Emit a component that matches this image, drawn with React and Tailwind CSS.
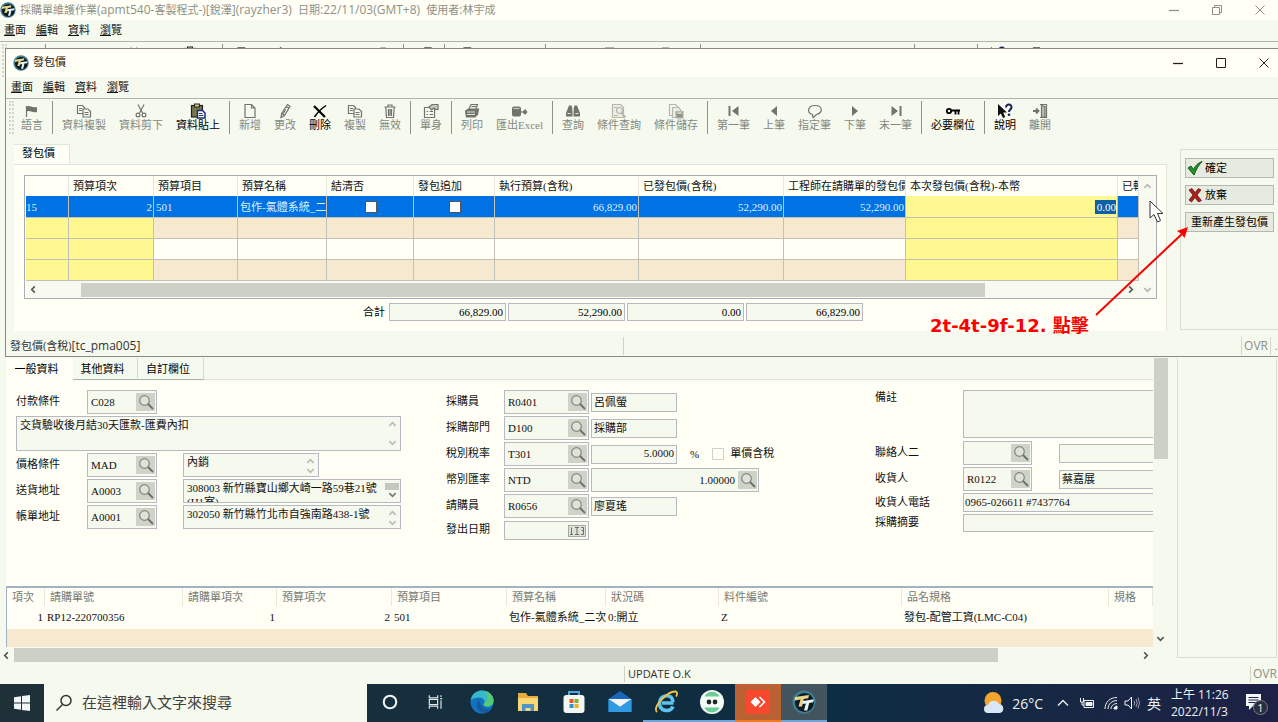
import React from "react";

const FORM_FONT = "font-['Liberation_Serif','Noto_Sans_CJK_TC',serif]";
const UI_FONT = "font-['Open_Sans','Noto_Sans_CJK_TC',sans-serif]";

function Logo({ className }) {
  return (
    <svg viewBox="0 0 24 24" className={className} aria-hidden="true">
      <circle cx="12" cy="12" r="11.5" fill="#3f7f96" />
      <circle cx="12.5" cy="12.5" r="9.5" fill="#0d1b22" />
      <path d="M3 7l14-2-.7 3.200-4.500.7-1.800 7.600H6.500l2-7-6 .9z" fill="#e8d48a" />
      <path d="M11 11l11-1.700-.8 3-4 .6-1.900 7.600h-3.300l1.900-7-3.600.6z" fill="#e9f2f5" />
    </svg>
  );
}

function Glyph({ children, className = "" }) {
  return (
    <svg
      viewBox="0 0 16 16"
      className={`h-4 w-4 ${className}`}
      fill="none"
      stroke="currentColor"
      strokeWidth="1.2"
      aria-hidden="true"
    >
      {children}
    </svg>
  );
}

const glyphs = {
  flag: (
    <>
      <path d="M2.500 3v11" />
      <path d="M3 3.500c3-1.500 4 1.500 10 .5v5c-6 1-7-2-10-.5z" fill="currentColor" stroke="none" />
    </>
  ),
  copy: (
    <>
      <path d="M1.500 2.500h5l2 2v6h-7z" fill="#f6f9ed" />
      <path d="M3 5.500h3M3 7.500h3" />
      <path d="M7 6h5l2.500 2.500v5.500H7z" fill="#f6f9ed" />
      <path d="M8.500 9.500h4M8.500 11.500h4" />
    </>
  ),
  cut: (
    <>
      <path d="M5 1.500l4.500 8.500M11 1.500L6.500 10" />
      <circle cx="5" cy="12" r="1.900" />
      <circle cx="11" cy="12" r="1.900" />
    </>
  ),
  paste: (
    <>
      <rect x="1.500" y="2.500" width="11" height="11.500" fill="#77764a" stroke="#222" />
      <rect x="4.500" y="1" width="5" height="3" fill="#c9c58a" stroke="#222" strokeWidth="1" />
      <path d="M7.500 7.500h5l2.500 2.500v5H7.500z" fill="#fff" stroke="#1c2b7a" strokeWidth="1.500" />
      <path d="M9 10.500h3.500M9 12.500h4.500" stroke="#1c2b7a" />
    </>
  ),
  page: <path d="M3 1.500h6.500L13 5v9.500H3zM9.500 1.500V5H13" />,
  pencil: <path d="M10.500 1.500l2.500 1.800-5.500 9.200-3.500 2 .6-4zM9.300 3.500l2.500 1.800M5 10.500l2.400 1.800M8.700 6.500l-2.400 4" />,
  cross: (
    <>
      <path d="M2 3l11 11" strokeWidth="2.200" />
      <path d="M14 2.500C9 6 5 10 2.500 14" strokeWidth="1.500" />
    </>
  ),
  trash: <path d="M2.500 4h11M6 4V2h4v2M3.800 4l.7 10.500h7L12.200 4M6.500 6v7M8 6v7M9.500 6v7" />,
  detail: (
    <>
      <path d="M1.500 4.500h10v10h-10z" />
      <path d="M3.500 8.500h1.500M6.500 8.500h3.500M3.500 11.500h1.500M6.500 11.500h3.500" />
      <path d="M6 4l3-2.500h6v5h-2.500L11 5 8.500 7z" fill="#c5c9bc" />
    </>
  ),
  print: (
    <>
      <path d="M5 6l2-4.500h6.500L12 6" fill="#f6f9ed" />
      <path d="M1.500 8l3-2h10l-1 5.500-2.500 2.500H2.500z" fill="currentColor" />
      <path d="M3 9h8M3 11.500h8" stroke="#dfe3d6" />
      <path d="M7.500 3.500H12" />
    </>
  ),
  exportDb: (
    <>
      <rect x="0" y="3.500" width="9" height="10" rx="2" fill="currentColor" stroke="none" />
      <path d="M1.500 5.500h6" stroke="#c5c9bc" />
      <path d="M13 6l2.500 3-2.500 3-2.500-3z" fill="currentColor" stroke="none" />
      <path d="M9 9h3" />
    </>
  ),
  find: (
    <>
      <path d="M4 2.500h2.500L7.500 6v7.500H1V10zM12 2.500H9.500L8.500 6v7.500H15V10z" fill="currentColor" stroke="none" />
      <path d="M2.500 10.500h3M10.500 10.500h3M7 7h2" stroke="#e8ecdf" />
    </>
  ),
  findPage: (
    <>
      <path d="M1.500 1.500h8l3 3v10h-11z" fill="#eceee4" />
      <circle cx="8.500" cy="7.500" r="3" />
      <path d="M10.500 10l4 4.500" strokeWidth="2" />
      <path d="M3 4.500h3M3 12.500h4" />
    </>
  ),
  savePage: (
    <>
      <path d="M1.500 1.500h6l2 2v9h-8z" />
      <path d="M4.500 4.500h6l2 2v8h-8z" fill="#eceee4" />
      <rect x="8" y="8.500" width="7" height="6.500" fill="#8f948a" />
      <path d="M9.500 10h4" stroke="#f6f9ed" />
    </>
  ),
  first: (
    <>
      <path d="M3.500 3v10" strokeWidth="2" />
      <path d="M12.500 3v10L6 8z" fill="currentColor" stroke="none" />
    </>
  ),
  prev: <path d="M11 3v10L5 8z" fill="currentColor" stroke="none" />,
  bubble: <path d="M5.500 11.500C-.5 10 .5 2.500 8 2.500s8.500 7 1.500 9l-3.500 3z" />,
  next: <path d="M5 3v10l6-5z" fill="currentColor" stroke="none" />,
  last: (
    <>
      <path d="M12.500 3v10" strokeWidth="2" />
      <path d="M3.500 3v10L10 8z" fill="currentColor" stroke="none" />
    </>
  ),
  key: (
    <>
      <circle cx="4" cy="8" r="2.200" strokeWidth="1.800" />
      <path d="M6.500 7.500H15M10.500 8v3.500M13.500 8v3.500" strokeWidth="1.800" />
    </>
  ),
  help: (
    <>
      <path d="M1 1v12l2.800-2.500L6 15l2.200-1-2-4.500H10z" fill="#111" stroke="none" />
      <path d="M9 4.500C9 .5 15 .8 14.500 4.500c-.3 2-2.500 2-2.500 4.500" stroke="#17225c" strokeWidth="2" />
      <circle cx="12" cy="11.800" r="1.300" fill="#17225c" stroke="none" />
    </>
  ),
  exit: (
    <>
      <path d="M8 1.500h6.500v13H8" />
      <path d="M9.500 2.500l3.500 1v11l-3.500-1z" fill="#b9bdb0" />
      <path d="M1 8h5M4 5.500L6.500 8 4 10.500" strokeWidth="1.800" />
    </>
  ),
};

const toolbarGroups = [
  [{ label: "語言", icon: "flag" }],
  [
    { label: "資料複製", icon: "copy" },
    { label: "資料剪下", icon: "cut" },
    { label: "資料貼上", icon: "paste", on: true },
  ],
  [
    { label: "新增", icon: "page" },
    { label: "更改", icon: "pencil" },
    { label: "刪除", icon: "cross", on: true },
    { label: "複製", icon: "copy" },
    { label: "無效", icon: "trash" },
  ],
  [{ label: "單身", icon: "detail" }],
  [
    { label: "列印", icon: "print" },
    { label: "匯出Excel", icon: "exportDb" },
  ],
  [
    { label: "查詢", icon: "find" },
    { label: "條件查詢", icon: "findPage", pale: true },
    { label: "條件儲存", icon: "savePage", pale: true },
  ],
  [
    { label: "第一筆", icon: "first" },
    { label: "上筆", icon: "prev" },
    { label: "指定筆", icon: "bubble" },
    { label: "下筆", icon: "next" },
    { label: "末一筆", icon: "last" },
  ],
  [{ label: "必要欄位", icon: "key", on: true }],
  [
    { label: "說明", icon: "help", on: true },
    { label: "離開", icon: "exit" },
  ],
];

function Toolbar({ className = "pl-[3px]" }) {
  return (
    <div role="toolbar" className={`flex items-center gap-px border-t border-[#b0b3a9] py-[2px] ${className} ${FORM_FONT}`}>
      <span className="h-[33px] w-[5px] border-x-2 border-dotted border-[#d3d6cb]" />
      {toolbarGroups.map((group, i) => (
        <React.Fragment key={i}>
          {i > 0 && <span className="mx-[2px] h-[33px] w-px bg-[#8f938a]" />}
          {group.map((t) => (
            <button
              key={t.label}
              type="button"
              disabled={!t.on}
              className={`flex flex-col items-center px-[6px] text-[11px] leading-[13px] whitespace-nowrap ${
                t.on ? "text-black" : "text-[#858980]"
              }`}
            >
              <Glyph className={t.on ? "text-black" : t.pale ? "text-[#b4b8ac]" : "text-[#70746b]"}>{glyphs[t.icon]}</Glyph>
              {t.label}
            </button>
          ))}
        </React.Fragment>
      ))}
    </div>
  );
}

function TitleBar({ children, muted, restore, className }) {
  return (
    <header className={`flex items-center bg-[#fffff6] ${className}`}>
      <Logo className="h-4 w-4" />
      <h1 className={`ml-1 flex-1 font-normal whitespace-pre ${UI_FONT} ${muted ? "text-[#8d918a]" : "text-[#222]"}`}>{children}</h1>
      <div className={`flex gap-[31px] ${muted ? "text-[#8d918a]" : "text-[#222]"}`}>
        <button type="button" aria-label="最小化">
          <svg viewBox="0 0 12 12" className="h-3 w-3" stroke="currentColor" fill="none"><path d="M1 6.500h10" strokeWidth="1.300" /></svg>
        </button>
        <button type="button" aria-label={restore ? "還原" : "最大化"}>
          <svg viewBox="0 0 12 12" className="h-3 w-3" stroke="currentColor" fill="none">
            {restore ? <path d="M1.500 3.500h7v7h-7zM3.500 3.500v-2h7v7h-2" /> : <path d="M1.500 1.500h9v9h-9z" />}
          </svg>
        </button>
        <button type="button" aria-label="關閉">
          <svg viewBox="0 0 12 12" className="h-3 w-3" stroke="currentColor" fill="none"><path d="M1.500 1.500l9 9M10.500 1.500l-9 9" /></svg>
        </button>
      </div>
    </header>
  );
}

function MenuBar({ className }) {
  return (
    <nav className={`flex h-[21px] items-center gap-[10px] pb-px text-[11px] text-[#111] ${UI_FONT} ${className}`}>
      {["畫面", "編輯", "資料", "瀏覽"].map((m) => (
        <button key={m} type="button">
          <span className="underline underline-offset-1">{m[0]}</span>
          {m[1]}
        </button>
      ))}
    </nav>
  );
}

function Chevron({ dir, className = "text-[#555]" }) {
  const d = {
    left: "M6.500 1.500L3 5l3.500 3.500",
    right: "M3.500 1.500L7 5 3.500 8.500",
    up: "M1.500 6.500L5 3l3.500 3.500",
    down: "M1.500 3.500L5 7l3.500-3.500",
  }[dir];
  return (
    <svg viewBox="0 0 10 10" className={`h-[9px] w-[9px] shrink-0 ${className}`} fill="none" stroke="currentColor" strokeWidth="1.800" aria-hidden="true">
      <path d={d} />
    </svg>
  );
}

const budgetCols = [
  { w: "w-[43px]", head: "", yellow: true },
  { w: "w-[85px]", head: "預算項次", yellow: true },
  { w: "w-[84px]", head: "預算項目" },
  { w: "w-[89px]", head: "預算名稱" },
  { w: "w-[87px]", head: "結清否" },
  { w: "w-[81px]", head: "發包追加" },
  { w: "w-[144px]", head: "執行預算(含稅)" },
  { w: "w-[145px]", head: "已發包價(含稅)" },
  { w: "w-[122px]", head: "工程師在請購單的發包價" },
  { w: "", head: "本次發包價(含稅)-本幣", yellow: true, wide: true },
  { w: "w-[21px]", head: "已轉" },
];

function cellTone(col, row) {
  if (row === 0) return col.wide ? "bg-[#fff891]" : "bg-[#0072e4]";
  if (col.yellow) return "bg-[#fff891]";
  return row % 2 ? "bg-[#f7e8d0]" : "bg-[#fffff6]";
}

function BudgetTable() {
  const first = [
    "15",
    "2",
    "501",
    "包作-氣體系統_二次",
    <input key="a" type="checkbox" aria-label="結清否" className="mx-auto block h-3 w-3 appearance-none border border-[#555] bg-white" />,
    <input key="b" type="checkbox" aria-label="發包追加" className="mx-auto block h-3 w-3 appearance-none border border-[#555] bg-white" />,
    "66,829.00",
    "52,290.00",
    "52,290.00",
    <input key="c" aria-label="本次發包價" defaultValue="0.00" className="ml-auto block w-[21px] bg-[#0f5ea8] text-right text-white outline-none" />,
    "",
  ];
  const right = [1, 6, 7, 8, 9];
  return (
    <table className="w-full table-fixed border-separate border-spacing-0 text-[11px] leading-[14px]">
      <colgroup>
        {budgetCols.map((c, i) => <col key={i} className={c.w} />)}
      </colgroup>
      <thead>
        <tr className="h-5">
          {budgetCols.map((c, i) => (
            <th key={i} scope="col" className="overflow-hidden border-r border-[#e6e7dc] bg-[#fffff6] py-0 pr-0 pl-1 text-left font-normal whitespace-nowrap text-[#111]">
              {c.head}
            </th>
          ))}
        </tr>
      </thead>
      <tbody>
        {[0, 1, 2, 3].map((r) => (
          <tr key={r} className={r === 0 ? "h-[22px]" : "h-[21px]"}>
            {budgetCols.map((c, i) => (
              <td
                key={i}
                className={`overflow-hidden border-r border-b border-[#c3c1b6] p-0 whitespace-nowrap text-[#dff0ff] ${cellTone(c, r)} ${
                  right.includes(i) ? "pr-px text-right" : i > 1 ? "pl-[2px]" : ""
                }`}
              >
                {r === 0 ? first[i] : ""}
              </td>
            ))}
          </tr>
        ))}
      </tbody>
    </table>
  );
}

function ActionButton({ children, icon }) {
  return (
    <button type="button" className={`flex h-5 items-center gap-[2px] border border-[#b5b8ae] bg-[#e7eade] text-[11px] whitespace-nowrap text-black ${icon ? "pl-px" : "justify-center"} ${FORM_FONT}`}>
      {icon}
      {children}
    </button>
  );
}

function BudgetDialog() {
  return (
    <section aria-label="發包價" className="absolute top-[48px] right-0 left-[5px] border-t border-b border-l border-[#878b82] bg-[#f6f9ed]">
      <TitleBar className="h-7 pr-2 pb-px pl-[7px] text-[11px]">發包價</TitleBar>
      <MenuBar className="pl-[5px]" />
      <Toolbar />
      <div className="flex h-[195px] gap-[13px] pt-2 pl-2">
        <div className="flex min-w-0 flex-1 flex-col">
          <div role="tablist" className="flex">
            <button type="button" role="tab" aria-selected="true" className={`h-5 w-[56px] border-t border-r border-[#e3e5d9] bg-[#fffff6] pr-[6px] pb-[2px] text-[11px] ${FORM_FONT}`}>
              發包價
            </button>
          </div>
          <div className={`flex flex-1 flex-col border-t border-r border-[#e3e5d9] bg-[#fffff6] pt-[10px] pr-[9px] pl-[10px] ${FORM_FONT}`}>
            <div className="border border-[#a9acb4] pl-px">
              <div className="flex">
                <div className="min-w-0 flex-1"><BudgetTable /></div>
                <div className="flex w-[17px] justify-center bg-[#f8faef] pt-[6px]"><Chevron dir="up" className="text-[#b6b9ae]" /></div>
              </div>
              <div className="flex h-[17px] items-center bg-[#f8faef]">
                <span className="flex w-[55px] pl-[3px]"><Chevron dir="left" /></span>
                <span className="h-[14px] w-4/5 bg-[#cdd0c5]" />
                <span className="flex-1" />
                <Chevron dir="right" />
                <span className="ml-1 flex w-[17px] justify-center"><Chevron dir="down" className="text-[#b6b9ae]" /></span>
              </div>
            </div>
            <div className="mt-1 flex items-center gap-[2px] pl-[339px] text-[11px]">
              <span className="mr-[2px]">合計</span>
              {["66,829.00", "52,290.00", "0.00", "66,829.00"].map((v, i) => (
                <input key={i} readOnly aria-label={`合計 ${i + 1}`} defaultValue={v} className="h-[18px] w-[117px] border border-[#b7b8c2] bg-[#f6f9ed] pr-[2px] text-right" />
              ))}
            </div>
          </div>
        </div>
        <aside className="mt-[5px] mb-px flex w-[98px] flex-col gap-[7px] border-t border-b border-l border-[#d9dcd0] py-2 pr-1 pl-1">
          <ActionButton icon={<svg viewBox="0 0 16 16" className="h-4 w-4" aria-hidden="true"><path d="M1 8l3-2 2.500 3.500C8.500 5.500 11 3 15 1.500 11.500 5.500 9 9.500 7 15z" fill="#23922a" stroke="#0f5a17" /></svg>}>確定</ActionButton>
          <ActionButton icon={<svg viewBox="0 0 16 16" className="h-4 w-4" aria-hidden="true"><path d="M2 3l3-1.500L8 5.500l3.500-4L14 3l-4 5 4.500 5.500-3 1.500L8 10.500 4.500 15 2 13l4-5z" fill="#a5231d" stroke="#6d1411" strokeWidth=".8" /></svg>}>放棄</ActionButton>
          <ActionButton>重新產生發包價</ActionButton>
        </aside>
      </div>
      <footer className={`flex h-[25px] items-center pt-1 pl-1 text-[12px] text-[#333] ${UI_FONT}`}>
        <span className="h-[18px] w-[614px] border-r border-[#cfd2c6] leading-[18px]">
          <span className="text-[11px]">發包價(含稅)</span>[tc_pma005]
        </span>
        <span className="flex-1" />
        <span className="h-[18px] border-x border-[#d3d6ca] px-[2px] leading-[18px] text-[#8c9087]">OVR</span>
        <span className="w-[7px] text-right text-[#a3a79c]">.</span>
      </footer>
    </section>
  );
}

const boxTone = "border border-[#b7b8c2] bg-[#f6f9ed]";

function SearchButton({ label }) {
  return (
    <button type="button" aria-label={`查詢${label}`} className="flex h-[18px] w-[19px] shrink-0 items-center justify-center bg-[#cfd2c6]">
      <svg viewBox="0 0 16 16" className="h-4 w-4" fill="none" aria-hidden="true">
        <circle cx="6.500" cy="6.500" r="4.800" stroke="#83877e" strokeWidth="1.200" fill="#dfe2d7" />
        <path d="M10 10l5 5" stroke="#6a6e66" strokeWidth="1.800" />
      </svg>
    </button>
  );
}

function Lookup({ id, label, value, width, alignRight }) {
  return (
    <div className={`flex h-6 items-center pr-px ${boxTone} ${width}`}>
      <input id={id} aria-label={id ? undefined : label} defaultValue={value} className={`min-w-0 flex-1 bg-transparent px-[3px] pb-px outline-none ${alignRight ? "text-right" : ""}`} />
      <SearchButton label={label} />
    </div>
  );
}

function Memo({ id, label, value, className, scroll }) {
  return (
    <div className={`flex ${boxTone} ${className}`}>
      <textarea id={id} aria-label={id ? undefined : label} defaultValue={value} className="min-w-0 flex-1 resize-none overflow-hidden bg-transparent px-[3px] py-px leading-[14px] outline-none" />
      <div className={`flex w-4 flex-col items-center justify-between py-[3px] ${scroll ? "text-[#777]" : "text-[#b9bcb2]"}`}>
        {scroll ? <span className="h-[10px] w-[14px] bg-[#c5c8bc]" /> : <Chevron dir="up" className="" />}
        <Chevron dir="down" className="" />
      </div>
    </div>
  );
}

function NameBox({ label, value, alignRight, className = "w-[86px]" }) {
  return (
    <input
      aria-label={label}
      defaultValue={value}
      className={`h-[19px] min-w-0 px-[2px] pb-[2px] ${boxTone} ${alignRight ? "text-right" : ""} ${className}`}
    />
  );
}

function Label({ htmlFor, children }) {
  return <label htmlFor={htmlFor} className="pb-[2px] whitespace-nowrap">{children}</label>;
}

function GeneralForm() {
  return (
    <div className={`flex flex-1 items-start overflow-hidden bg-[#fffff6] pt-[9px] pl-[10px] text-[11px] leading-[14px] text-[#111] ${FORM_FONT}`}>
      <div className="grid w-[385px] shrink-0 grid-cols-[71px_96px_1fr] items-center gap-y-[2px]">
        <Label htmlFor="pay">付款條件</Label>
        <Lookup id="pay" label="付款條件" value="C028" width="w-[70px]" />
        <span />
        <Memo label="付款條件說明" value="交貨驗收後月結30天匯款-匯費內扣" className="col-span-3 h-[35px]" />
        <Label htmlFor="price">價格條件</Label>
        <Lookup id="price" label="價格條件" value="MAD" width="w-[70px]" />
        <Memo label="價格條件說明" value="內銷" className="h-6 w-[136px]" />
        <Label htmlFor="ship">送貨地址</Label>
        <Lookup id="ship" label="送貨地址" value="A0003" width="w-[70px]" />
        <Memo label="送貨地址內容" value="308003 新竹縣寶山鄉大崎一路59巷21號(H1室)" className="h-6" scroll />
        <Label htmlFor="bill">帳單地址</Label>
        <Lookup id="bill" label="帳單地址" value="A0001" width="w-[70px]" />
        <Memo label="帳單地址內容" value="302050 新竹縣竹北市自強南路438-1號" className="h-6" />
      </div>

      <div className="ml-[45px] grid w-[384px] shrink-0 grid-cols-[58px_87px_1fr] items-center gap-y-[2px]">
        <Label htmlFor="buyer">採購員</Label>
        <Lookup id="buyer" label="採購員" value="R0401" width="w-[85px]" />
        <NameBox label="採購員姓名" value="呂佩螢" />
        <Label htmlFor="dept">採購部門</Label>
        <Lookup id="dept" label="採購部門" value="D100" width="w-[85px]" />
        <NameBox label="部門名稱" value="採購部" />
        <Label htmlFor="tax">稅別稅率</Label>
        <Lookup id="tax" label="稅別稅率" value="T301" width="w-[85px]" />
        <div className="flex items-center">
          <NameBox label="稅率" value="5.0000" alignRight />
          <span className="mx-[13px]">%</span>
          <input id="incl" type="checkbox" className="mr-[6px] h-3 w-3 appearance-none border border-[#cfd2c8] bg-[#fffff6]" />
          <Label htmlFor="incl">單價含稅</Label>
        </div>
        <Label htmlFor="cur">幣別匯率</Label>
        <Lookup id="cur" label="幣別匯率" value="NTD" width="w-[85px]" />
        <Lookup label="匯率" value="1.00000" width="w-[168px]" alignRight />
        <Label htmlFor="req">請購員</Label>
        <Lookup id="req" label="請購員" value="R0656" width="w-[85px]" />
        <NameBox label="請購員姓名" value="廖夏瑤" />
        <Label htmlFor="date">發出日期</Label>
        <div className={`mt-px flex h-[19px] w-[85px] items-center pr-[2px] ${boxTone}`}>
          <input id="date" className="min-w-0 flex-1 bg-transparent px-[3px] outline-none" />
          <button type="button" aria-label="選擇日期">
            <svg viewBox="0 0 18 12" className="h-3 w-[18px]" fill="none" stroke="#6a6e66" aria-hidden="true">
              <path d="M.5.5h17v11H.5z" fill="#dfe2d6" stroke="#a4a89d" />
              <path d="M3.500 2.500v7M2 9.500h3M7 2.500h4M9 2.500v7M7 9.500h4M13 2.500h2.500v3H13.500M15.500 5.500v4H13" />
            </svg>
          </button>
        </div>
      </div>

      <div className="ml-[45px] grid min-w-0 flex-1 grid-cols-[88px_96px_1fr] items-center gap-y-[2px]">
        <span className="self-start"><Label htmlFor="note">備註</Label></span>
        <textarea id="note" className={`col-span-2 mb-px h-12 resize-none border-r-0 ${boxTone}`} />
        <Label htmlFor="contact">聯絡人二</Label>
        <Lookup id="contact" label="聯絡人二" value="" width="w-[69px]" />
        <NameBox label="聯絡人二姓名" className="border-r-0" />
        <Label htmlFor="recv">收貨人</Label>
        <Lookup id="recv" label="收貨人" value="R0122" width="w-[69px]" />
        <NameBox label="收貨人姓名" value="蔡嘉展" className="border-r-0" />
        <Label htmlFor="tel">收貨人電話</Label>
        <input id="tel" defaultValue="0965-026611 #7437764" className={`col-span-2 h-[19px] border-r-0 px-px pb-[2px] ${boxTone}`} />
        <Label htmlFor="memo">採購摘要</Label>
        <input id="memo" className={`col-span-2 h-[18px] border-r-0 px-px ${boxTone}`} />
      </div>
    </div>
  );
}

const itemCols = [
  { w: "w-[38px]", head: "項次", value: "1", right: true },
  { w: "w-[138px]", head: "請購單號", value: "RP12-220700356" },
  { w: "w-[94px]", head: "請購單項次", value: "1", right: true },
  { w: "w-[115px]", head: "預算項次", value: "2", right: true },
  { w: "w-[115px]", head: "預算項目", value: "501" },
  { w: "w-[99px]", head: "預算名稱", value: "包作-氣體系統_二次" },
  { w: "w-[113px]", head: "狀況碼", value: "0:開立" },
  { w: "w-[183px]", head: "料件編號", value: "Z" },
  { w: "w-[207px]", head: "品名規格", value: "發包-配管工資(LMC-C04)" },
  { w: "", head: "規格", value: "" },
];

function ItemTable() {
  return (
    <table className={`w-full table-fixed border-separate border-spacing-0 border-t-2 border-l border-[#a3b1c4] bg-[#fffff6] text-[11px] leading-[14px] ${FORM_FONT}`}>
      <colgroup>
        {itemCols.map((c, i) => <col key={i} className={c.w} />)}
      </colgroup>
      <thead>
        <tr className="h-[18px]">
          {itemCols.map((c, i) => (
            <th key={i} scope="col" className="overflow-hidden border-r border-[#e8e9de] py-0 pr-0 pl-[5px] text-left font-normal whitespace-nowrap text-[#777b73]">{c.head}</th>
          ))}
        </tr>
      </thead>
      <tbody>
        <tr className="h-[23px]">
          {itemCols.map((c, i) => (
            <td key={i} className={`overflow-hidden px-[2px] pt-0 pb-px whitespace-nowrap text-[#111] ${c.right ? "text-right" : ""}`}>{c.value}</td>
          ))}
        </tr>
        <tr className="h-[18px] bg-[#f7e8d0]">
          {itemCols.map((c, i) => <td key={i} className="p-0" />)}
        </tr>
      </tbody>
    </table>
  );
}

const apps = [
  {
    name: "Cortana",
    small: true,
    art: <circle cx="12" cy="12" r="7.500" fill="none" stroke="#f1f4f4" strokeWidth="2.500" />,
  },
  {
    name: "工作檢視",
    small: true,
    art: (
      <path d="M4 4v3h10V4M4 20v-3h10v3M4 9h10v6H4zM18 4v2M18 10v10M17 8h2.500" fill="none" stroke="#e3e8e8" strokeWidth="1.400" />
    ),
  },
  {
    name: "Edge",
    art: (
      <>
        <circle cx="12" cy="12" r="11.500" fill="#1272bf" />
        <path d="M.8 10C2 3 7.500.5 12 .5c7 0 11.500 5 11.500 10 0 4-3 6-6.500 6-3 0-4-1.500-3-3 1.500-3-1-6-5-6-3.500 0-6.500 1-8.200 2.500z" fill="#35b8c9" />
        <path d="M14 1c6 1 9.500 5 9.500 9.500 0 4-3 6-6.500 6-3 0-4-1.500-3-3C18 12 19 5 14 1z" fill="#55c973" />
        <path d="M9 9.500c-4 4-2 11 4 13.500 4 0 7-2 8.500-4.500-5 2-11 0-12.500-9z" fill="#155a9c" />
      </>
    ),
  },
  {
    name: "檔案總管",
    art: (
      <>
        <path d="M2 3h8l2 3h10v15H2z" fill="#e6ac3d" />
        <path d="M2 8h20v13H2z" fill="#f9d775" />
        <path d="M6 21v-7h12v7h-3.500v-3h-5v3z" fill="#4f95c9" />
      </>
    ),
  },
  {
    name: "Microsoft Store",
    art: (
      <>
        <path d="M7 7V2h10v5" fill="none" stroke="#4aa7df" strokeWidth="2" />
        <rect x="1.500" y="5" width="21" height="18" rx="3" fill="#f4f6f1" />
        <path d="M7.500 9h4v4h-4z" fill="#e2572b" />
        <path d="M12.500 9h4v4h-4z" fill="#7cb32a" />
        <path d="M7.500 14h4v4h-4z" fill="#2f93d8" />
        <path d="M12.500 14h4v4h-4z" fill="#eeb223" />
      </>
    ),
  },
  {
    name: "郵件",
    art: (
      <>
        <path d="M.5 9L12 1l11.500 8v13H.5z" fill="#1a66b8" />
        <path d="M.5 9h23L12 17z" fill="#f2f6fa" />
        <path d="M.5 9L12 17l11.500-8v13H.5z" fill="#2f9be2" />
      </>
    ),
  },
  {
    name: "Internet Explorer",
    running: true,
    art: (
      <>
        <path d="M19.500 13H8M19 12c0-8.500-13-8.500-13.500 1 0 9 11 9.500 13.500 3.500" fill="none" stroke="#5fc3ee" strokeWidth="3.600" />
        <path d="M3 22C-2 17 14 1 21.500 1.500c2.500.5 1.500 4 .5 5" fill="none" stroke="#f0c441" strokeWidth="1.800" />
      </>
    ),
  },
  {
    name: "遠端助理",
    running: true,
    art: (
      <>
        <circle cx="12" cy="12" r="12" fill="#f3fbf5" />
        <path d="M4.500 6.500C7 0 17 0 19.500 6.500zM4.500 17.500c2.500 6.500 12.500 6.500 15 0z" fill="#6ecb95" />
        <rect x="5" y="8.500" width="14" height="7" rx="3.500" fill="#fff" />
        <circle cx="9" cy="12" r="2.400" fill="#1b2a22" />
        <circle cx="15" cy="12" r="2.400" fill="#1b2a22" />
      </>
    ),
  },
  {
    name: "AnyDesk",
    orange: true,
    art: (
      <>
        <rect x="0" y="0" width="24" height="24" rx="2" fill="#f8492e" />
        <path d="M9.500 7l5 5-5 5-5-5z" fill="#fff" />
        <path d="M13.500 7l5 5-5 5" fill="none" stroke="#fff" strokeWidth="1.600" />
      </>
    ),
  },
];

function Taskbar() {
  return (
    <footer className={`flex h-[38px] shrink-0 items-stretch bg-linear-to-r from-[#1f3038] via-[#0c2d42] via-65% to-[#1d2145] text-[#eef2f2] ${UI_FONT}`}>
      <button type="button" aria-label="開始" className="flex w-11 items-center justify-center">
        <svg viewBox="0 0 16 16" className="h-4 w-4" fill="#f3f6f6"><path d="M0 2.200l7-1v6.300H0zM8 1l8-1v7.500H8zM0 8.500h7v6.300l-7-1zM8 8.500h8V16l-8-1z" /></svg>
      </button>
      <label className="flex w-[323px] items-center bg-[#f6f9ed] text-[#3c403c]">
        <svg viewBox="0 0 20 20" className="mr-2 ml-[10px] h-5 w-5 shrink-0" fill="none" stroke="#333" strokeWidth="1.500" aria-hidden="true">
          <circle cx="12" cy="7.500" r="5" />
          <path d="M8.500 11.500L2.500 17.500" />
        </svg>
        <input aria-label="搜尋" placeholder="在這裡輸入文字來搜尋" className="w-full min-w-0 bg-transparent pb-px text-[15px] outline-none placeholder:text-[#3c403c]" />
      </label>
      {apps.map((a) => (
        <button
          key={a.name}
          type="button"
          aria-label={a.name}
          className={`flex w-[46px] items-center justify-center border-b-2 ${
            a.orange ? "border-[#f07a1e] bg-[#bb6234]" : a.running ? "border-[#6aa6dc]" : "border-transparent"
          }`}
        >
          <svg viewBox="0 0 24 24" className={a.small ? "h-5 w-5" : "h-6 w-6"}>{a.art}</svg>
        </button>
      ))}
      <button type="button" aria-label="發包價" className="flex w-[46px] items-center justify-center border-b-2 border-[#6aa6dc] bg-[#42555f]">
        <Logo className="h-6 w-6" />
      </button>
      <span className="flex-1" />
      <div className="flex items-center pr-[10px]">
        <svg viewBox="0 0 24 24" className="mr-[6px] h-6 w-6" aria-hidden="true">
          <circle cx="11" cy="9.500" r="8.500" fill="#f5a52c" />
          <path d="M6 22a4 4 0 010-8 6 6 0 0111-1 4.600 4.600 0 011 9z" fill="#d9e6f5" />
        </svg>
        <span className="text-[14px] whitespace-nowrap">26°C</span>
        <svg viewBox="0 0 12 12" className="mr-[10px] ml-[14px] h-3 w-3" fill="none" stroke="currentColor" strokeWidth="1.400"><path d="M1 8.500l5-5 5 5" /></svg>
        <svg viewBox="0 0 16 12" className="mr-[9px] h-3 w-4" fill="none" stroke="currentColor"><path d="M5 3.500h9.500v7H5zM1.500 1v4h3V1M3 5v3h2" /><path d="M7 5.500h6v3H7z" fill="currentColor" /></svg>
        <svg viewBox="0 0 14 14" className="mr-[6px] h-[14px] w-[14px]" fill="none" stroke="currentColor"><path d="M1 13C1 6 6 1.500 13 1.500M4 13c0-5 4-8.500 9-8.500M7 13c0-3 2.500-5.500 6-5.500" /><path d="M10 13c0-1.500 1-3 3-3v3z" fill="currentColor" /></svg>
        <svg viewBox="0 0 16 14" className="mr-[7px] h-[14px] w-4" fill="none" stroke="currentColor"><path d="M1 5h3l3.500-4v12L4 9H1z" /><path d="M10 4.500q1.500 2.500 0 5M12 3q2.500 4 0 8M14 1.500q3 5.500 0 11" opacity=".6" /></svg>
        <span className="mr-[10px] text-[14px]">英</span>
        <div className="mr-[17px] w-[56px] text-center text-[12px] leading-[17px] whitespace-nowrap">
          <div>上午 11:26</div>
          <div>2022/11/3</div>
        </div>
        <button type="button" aria-label="通知" className="relative">
          <svg viewBox="0 0 24 24" className="h-6 w-6"><path d="M2 3h15v12H9l-4 4v-4H2z" fill="#f4f6f6" /><path d="M4.500 6.500h10M4.500 9h10M4.500 11.500h10" stroke="#1d2145" strokeWidth="1.200" /></svg>
          <span className="absolute top-[9px] left-[9px] flex h-[15px] w-[15px] items-center justify-center rounded-full border border-[#777b84] bg-[#2c2e3c] text-[11px] leading-none">1</span>
        </button>
      </div>
    </footer>
  );
}

export default function App() {
  return (
    <div className="relative flex min-h-screen flex-col overflow-hidden bg-[#f6f9ed] text-black">
      <TitleBar muted restore className="h-5 pr-3 text-[12px]">
        <span className="text-[11px]">採購單維護作業</span>(apmt540-<span className="text-[11px]">客製程式</span>-)[
        <span className="text-[11px]">銳澤</span>](rayzher3){"  "}
        <span className="text-[11px]">日期</span>:22/11/03(GMT+8){"  "}
        <span className="text-[11px]">使用者</span>:<span className="text-[11px]">林宇成</span>
      </TitleBar>
      <MenuBar className="pl-[4px]" />
      <Toolbar className="pl-[2px]" />

      <main className="flex flex-1 flex-col pt-[279px]">
        <div className="flex flex-1">
          <div className="flex min-w-0 flex-1 flex-col pl-[6px]">
            <div role="tablist" className={`flex items-stretch text-[11px] leading-[14px] ${FORM_FONT}`}>
              <button type="button" role="tab" aria-selected="true" className="h-[23px] w-[67px] bg-[#fffff6] pr-[6px] pb-[2px]">一般資料</button>
              <button type="button" role="tab" aria-selected="false" className="h-[22px] w-[65px] border-r border-b border-[#a9b3b0] border-r-[#d5d8cd] pr-[5px]">其他資料</button>
              <button type="button" role="tab" aria-selected="false" className="h-[22px] w-[66px] border-r border-b border-[#a9b3b0] border-r-[#d5d8cd] pr-[5px]">自訂欄位</button>
              <span className="h-[22px] flex-1 border-b border-[#e0e2d6]" />
            </div>
            <GeneralForm />
            <ItemTable />
          </div>
          <div className="flex w-[15px] flex-col items-center justify-between">
            <span className="h-[101px] w-[14px] bg-[#cdd0c5]" />
            <span className="pb-1"><Chevron dir="down" /></span>
          </div>
          <div className="mr-px -mb-[11px] ml-[9px] w-[100px] border-x border-b border-[#dadcd1]" />
        </div>
        <div className="mr-[128px] flex h-4 items-center pl-[2px]">
          <Chevron dir="left" />
          <span className="ml-[3px] h-[14px] w-6/7 bg-[#cdd0c5]" />
          <span className="flex-1" />
          <Chevron dir="right" />
        </div>
        <div className={`flex h-[21px] items-center text-[11px] text-[#333] ${UI_FONT}`}>
          <span className="flex-1" />
          <span className="h-4 w-[626px] border-l border-[#cfd2c6] pl-[3px] leading-4">UPDATE O.K</span>
          <span className="h-4 w-[28px] border-l border-[#cfd2c6] pl-[2px] text-[12px] leading-4 text-[#8c9087]">OVR</span>
        </div>
      </main>
      <Taskbar />

      <BudgetDialog />

      <div className="pointer-events-none absolute top-[195px] right-0 h-[145px] w-[360px]">
        <svg viewBox="0 0 360 145" className="h-full w-full" aria-hidden="true">
          <path d="M232 6v17l4-3.500 3.500 7.500 3-1.500-3-7h5.500z" fill="#fff" stroke="#333" />
          <path d="M178 120L265 38" stroke="#fc0000" strokeWidth="2" />
          <path d="M270 32l-3.500 11-3-4-4.500-3z" fill="#fc0000" />
        </svg>
        <p className="absolute top-[119px] left-[12px] font-['DejaVu_Sans','Noto_Sans_CJK_TC',sans-serif] text-[18px] leading-6 font-bold whitespace-nowrap text-[#fc0000]">
          2t-4t-9f-12. 點擊
        </p>
      </div>
    </div>
  );
}
